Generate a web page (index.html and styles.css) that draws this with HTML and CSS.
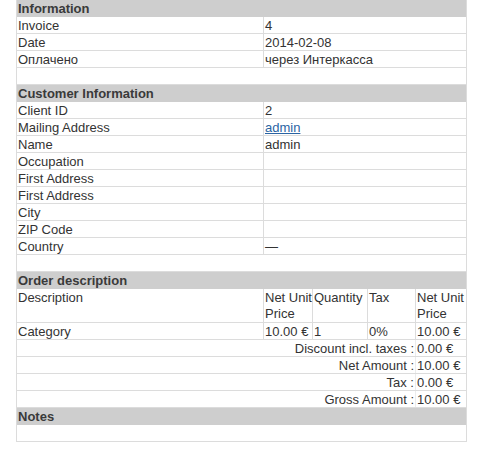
FILE: index.html
```html
<!DOCTYPE html>
<html>
<head>
<meta charset="utf-8">
<link rel="stylesheet" href="styles.css">
</head>
<body>
<table class="order">
  <colgroup>
    <col class="c1"><col class="c2"><col class="c3"><col class="c4"><col class="c5">
  </colgroup>
  <tr class="head"><th colspan="5">Information</th></tr>
  <tr><td>Invoice</td><td class="val" colspan="4">4</td></tr>
  <tr><td>Date</td><td class="val" colspan="4">2014-02-08</td></tr>
  <tr><td>Оплачено</td><td class="val" colspan="4">через Интеркасса</td></tr>
  <tr class="gap"><td colspan="5"></td></tr>

  <tr class="head"><th colspan="5">Customer Information</th></tr>
  <tr><td>Client ID</td><td class="val" colspan="4">2</td></tr>
  <tr><td>Mailing Address</td><td class="val" colspan="4"><a href="#">admin</a></td></tr>
  <tr><td>Name</td><td class="val" colspan="4">admin</td></tr>
  <tr><td>Occupation</td><td class="val" colspan="4"></td></tr>
  <tr><td>First Address</td><td class="val" colspan="4"></td></tr>
  <tr><td>First Address</td><td class="val" colspan="4"></td></tr>
  <tr><td>City</td><td class="val" colspan="4"></td></tr>
  <tr><td>ZIP Code</td><td class="val" colspan="4"></td></tr>
  <tr><td>Country</td><td class="val" colspan="4">—</td></tr>
  <tr class="gap"><td colspan="5"></td></tr>

  <tr class="head"><th colspan="5">Order description</th></tr>
  <tr class="cols"><td>Description</td><td class="val">Net Unit Price</td><td class="val">Quantity</td><td class="val">Tax</td><td class="val">Net Unit Price</td></tr>
  <tr><td>Category</td><td class="val">10.00&nbsp;€</td><td class="val">1</td><td class="val">0%</td><td class="val">10.00&nbsp;€</td></tr>
  <tr class="sum"><td class="lbl" colspan="4">Discount incl. taxes :</td><td class="amt">0.00 €</td></tr>
  <tr class="sum"><td class="lbl" colspan="4">Net Amount :</td><td class="amt">10.00 €</td></tr>
  <tr class="sum"><td class="lbl" colspan="4">Tax :</td><td class="amt">0.00 €</td></tr>
  <tr class="sum"><td class="lbl" colspan="4">Gross Amount :</td><td class="amt">10.00 €</td></tr>
  <tr class="head"><th colspan="5">Notes</th></tr>
  <tr class="gap"><td colspan="5"></td></tr>
</table>
</body>
</html>
```

FILE: styles.css
```css
html, body {
  margin: 0;
  padding: 0;
  background: #fff;
}
body {
  padding-left: 16px;
  font-family: "Liberation Sans", Arial, sans-serif;
  font-size: 13px;
  line-height: 15px;
  color: #333;
}
.order {
  width: 450px;
  table-layout: fixed;
  border-collapse: collapse;
  border: 1px solid #dcdcdc;
  border-top: 0;
}
.c1 { width: 247px; }
.c2 { width: 49px; }
.c3 { width: 55px; }
.c4 { width: 48px; }
.c5 { width: 51px; }
.order td, .order th {
  padding: 1px 0 0 1px;
  line-height: 15px;
  vertical-align: top;
  border-bottom: 1px solid #dcdcdc;
  text-align: left;
}
.order .head th {
  background: #cecece;
  font-weight: bold;
  color: #3a3a3a;
  border-bottom: 0;
  line-height: 16px;
}
.order td.val {
  border-left: 1px solid #dcdcdc;
}
.order .cols td {
  line-height: 16px;
}
.gap td {
  height: 15px;
}
.sum td.lbl {
  text-align: right;
  padding-right: 1px;
  border-right: 1px solid #ececec;
}
.sum td.amt {
  white-space: nowrap;
}
a {
  color: #2b64a3;
  text-decoration: underline;
}
```
